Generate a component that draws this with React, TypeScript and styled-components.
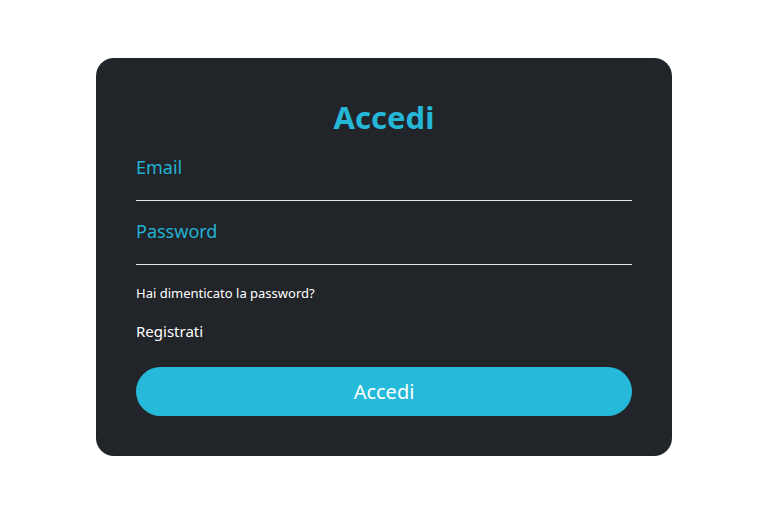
import React from "react";
import styled, { createGlobalStyle } from "styled-components";

const GlobalStyle = createGlobalStyle`
  html, body { margin: 0; padding: 0; background: #ffffff; }
  body { font-family: "Noto Sans", "Open Sans", Arial, sans-serif; }
  * { box-sizing: border-box; }
`;

const Page = styled.div`
  padding: 58px 0 0 96px;
`;

const Card = styled.form`
  width: 576px;
  background: #212429;
  border-radius: 18px;
  padding: 40px 40px 40px;
  display: flex;
  flex-direction: column;
`;

const Title = styled.h1`
  margin: 0 0 20px;
  font-size: 31px;
  line-height: 38px;
  font-weight: 700;
  color: #25b7d7;
  text-align: center;
`;

const Fields = styled.div`
  display: flex;
  flex-direction: column;
  gap: 19px;
`;

const Field = styled.label`
  display: flex;
  flex-direction: column;
`;

const Label = styled.span`
  font-size: 18px;
  line-height: 23px;
  color: #22b2d2;
`;

const Input = styled.input`
  height: 22px;
  border: none;
  border-bottom: 1px solid #e8e8e8;
  background: transparent;
  outline: none;
  color: #ffffff;
  font-family: inherit;
  font-size: 16px;
  padding: 0;
`;

const Link = styled.a<{ $size: number }>`
  color: #ffffff;
  text-decoration: none;
  font-size: ${(p) => p.$size}px;
  line-height: ${(p) => p.$size + 6}px;
`;

const Links = styled.div`
  display: flex;
  flex-direction: column;
  align-items: flex-start;
  gap: 18px;
  margin: 19px 0 25px;
`;

const Button = styled.button`
  height: 49px;
  width: 100%;
  border: none;
  border-radius: 25px;
  background: #26b9d9;
  color: #ffffff;
  font-family: inherit;
  font-size: 20px;
  cursor: pointer;
`;

export default function App() {
  return (
    <>
      <GlobalStyle />
      <Page>
        <Card onSubmit={(e) => e.preventDefault()}>
          <Title>Accedi</Title>
          <Fields>
            <Field>
              <Label>Email</Label>
              <Input type="email" />
            </Field>
            <Field>
              <Label>Password</Label>
              <Input type="password" />
            </Field>
          </Fields>
          <Links>
            <Link $size={13} href="#">Hai dimenticato la password?</Link>
            <Link $size={15} href="#">Registrati</Link>
          </Links>
          <Button type="submit">Accedi</Button>
        </Card>
      </Page>
    </>
  );
}
